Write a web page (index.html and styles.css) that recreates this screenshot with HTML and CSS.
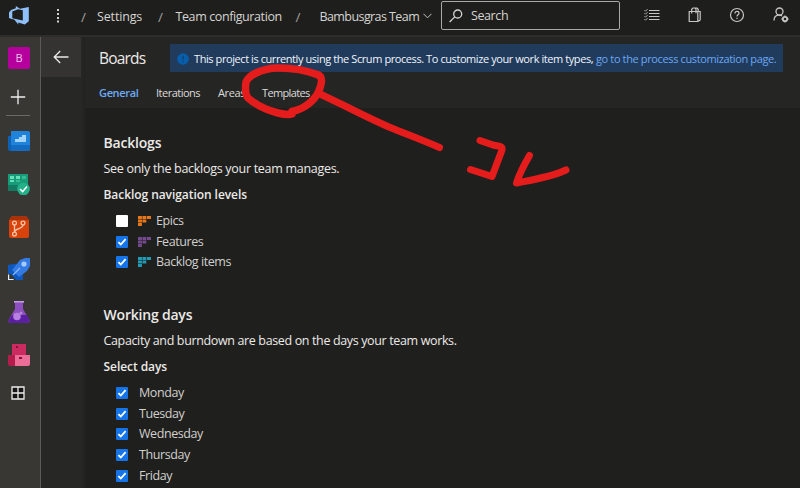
FILE: index.html
```
<!DOCTYPE html>
<html lang="en">
<head>
<meta charset="utf-8">
<title>Boards - Settings</title>
<link rel="stylesheet" href="styles.css">
</head>
<body>
<header class="topbar">
  <svg class="logo" width="20" height="20" viewBox="0 0 20 20"><path fill="#8fc0fa" fill-rule="evenodd" d="M0 6.500 2 4 6.800 2.200V0L11 2.700 19.800 1V15.200L15.800 18.600 9.300 16.400V18.500L5.200 13.400 2.500 13 0 12ZM3.300 5.600V12.300L13.800 14.400V4.300L9.200 3.200Z"/></svg>
  <svg class="more" width="4" height="14" viewBox="0 0 4 14" fill="#d4d2d0"><path d="M1 0h2v2H1zM1 4h2v2H1zM1 8h2v2H1zM1 11.500h2v2H1z"/></svg>
  <nav class="crumbs">
    <span class="slash">/</span><a class="c1">Settings</a>
    <span class="slash">/</span><a class="c2">Team configuration</a>
    <span class="slash">/</span><a class="c3">Bambusgras Team</a>
    <svg width="9" height="6" viewBox="0 0 9 6" fill="none" stroke="#c8c6c4"><path d="M.5.8 4.500 4.800 8.500.8"/></svg>
  </nav>
  <div class="search">
    <svg width="14" height="14" viewBox="0 0 14 14" fill="none" stroke="#d8d6d4" stroke-width="1.300"><circle cx="8.700" cy="5" r="4"/><path d="M5.800 7.900.6 13"/></svg>
    <span>Search</span>
  </div>
  <div class="tools">
    <svg width="16" height="16" viewBox="0 0 16 16" fill="none" stroke="#c8c6c4"><path d="M5 3.500h10.500M5 6.500h10.500M5 9.500h10.500M5 12.500h10.500" stroke-width="1.200"/><path d="m.5 3.200 1 1 2-2M.5 6.200l1 1 2-2M.5 9.200l1 1 2-2M.5 12.200l1 1 2-2" stroke-width=".9"/></svg>
    <svg width="14" height="16" viewBox="0 0 14 16" fill="none" stroke="#c8c6c4" stroke-width="1.200"><path d="M1.200 4.500h8.600v10H1.200zM9.800 4.500h2.400v8.500l-2.400 1.500M3.700 6.500V2.300L5 1h2l1 1.300v4M7 1h2l1.200 1.300v2.200"/></svg>
    <svg width="16" height="16" viewBox="0 0 16 16" fill="none" stroke="#c8c6c4" stroke-width="1.200"><circle cx="8" cy="8" r="6.500"/><path d="M6 6.500C6 3.700 10 3.900 10 6.300 10 7.800 8 7.800 8 9.500M8 10.700v1.300"/></svg>
    <svg width="16" height="16" viewBox="0 0 16 16" fill="none" stroke="#c8c6c4" stroke-width="1.300"><circle cx="6.500" cy="4.500" r="3.500"/><path d="M1 13.500c0-3.500 2-5.400 5-5.400 1.300 0 2.200.3 3 .9"/><circle cx="12" cy="12" r="2.200" stroke-width="1.800"/><path d="M12 8.500v1M12 14.500v1M8.500 12h1M14.500 12h1" stroke-width="1.400"/></svg>
  </div>
</header>
<div class="shell">
  <aside class="rail">
    <div class="avatar">B</div>
    <svg class="plus" width="16" height="16" viewBox="0 0 16 16" stroke="#f0efee" stroke-width="1.300"><path d="M8 .8v14.400M.8 8h14.400"/></svg>
    <hr>
    <svg class="app" width="22" height="22" viewBox="0 0 22 22"><path fill="#1161b3" d="M0 6h5v15H2q-2 0-2-2z"/><path fill="#1f83dc" d="M4 1h16q2 0 2 2v16q0 2-2 2H3V1z"/><path fill="#0c5daf" d="M1 15h21v4q0 2-2 2H2q-1 0-1-2z" opacity=".6"/><path fill="#a5d4fa" d="M7 12V9h4V7h3V5h4v7z"/></svg>
    <svg class="app" width="22" height="22" viewBox="0 0 22 22"><path fill="#189b79" d="M0 1h20v17H2q-2 0-2-2z"/><path fill="#137b61" d="M0 12h13v6H2q-2 0-2-2z"/><path fill="#67dfb7" d="M2 3h4v3H2zM8 3h4v3H8zM2 7h4v2H2z"/><path fill="#36ba91" d="M14 3h4v3h-4zM8 7h4v2H8z"/><circle cx="15.500" cy="16" r="6.300" fill="#23b18a"/><path d="m12 16 2.700 2.600 4.300-5" fill="none" stroke="#fff" stroke-width="1.500"/></svg>
    <svg class="app" width="22" height="22" viewBox="0 0 22 22"><path fill="#d8430c" d="M4 0h14l3 4v16q0 2-2 2H3q-2 0-2-2V4z"/><path fill="#a9320b" d="M4 0h14l3 4H1z"/><g fill="none" stroke="#ffc3a7" stroke-width="1.300"><circle cx="6.500" cy="7" r="1.900"/><circle cx="15" cy="7" r="1.900"/><circle cx="6.500" cy="18" r="1.900"/><path d="M6.500 9v7M15 9c0 4-8 3-8.500 7"/></g></svg>
    <svg class="app" width="22" height="22" viewBox="0 0 22 22"><path fill="#0d57bd" d="M0 7 5 6h10v16H8l-5-6H0z"/><path fill="#347ae3" d="m12 2 5-2h5v8l-3 5-8 6-7-7z"/><circle cx="16" cy="6" r="2.600" fill="#a5caff"/><path d="m5 17 7-7" stroke="#8db9fc" stroke-width="1.300"/><path d="M.6 16.500v5h5" fill="none" stroke="#e6f2ff" stroke-width="1.200"/></svg>
    <svg class="app" width="22" height="22" viewBox="0 0 22 22"><path fill="#8b50be" d="M6 0h10v2h-1v6l6.500 11q.8 3-2.500 3H3q-3.300 0-2.500-3L7 8V2H6z"/><path fill="#5b20a1" d="M4 14h15l2.500 5q.8 3-2.500 3H3q-3.300 0-2.500-3z"/><path fill="#c399e3" d="M6 0h10v1.500H6z"/><circle cx="9" cy="15.500" r="3.800" fill="#b77fe1"/><circle cx="13" cy="12" r="1.500" fill="#b985dd"/></svg>
    <svg class="app" width="22" height="22" viewBox="0 0 22 22"><path fill="#ca2c62" d="M4 0h14v11H4z"/><path fill="#b41c4b" d="M0 11h7v11H2q-2 0-2-2z"/><path fill="#ed6d99" d="M7 11h15v9q0 2-2 2H7z"/><path fill="#8a1238" d="M8 2h2v2H8zM11 13h3v2h-3z"/></svg>
    <svg class="grid" width="14" height="14" viewBox="0 0 14 14" fill="#151515" stroke="#eeedea" stroke-width="1.300"><path d="M1 1h12v12H1zM7 1v12M1 7h12"/></svg>
  </aside>
  <div class="backcol"><div class="back"><svg width="16" height="14" viewBox="0 0 16 14" fill="none" stroke="#eceae8" stroke-width="1.300"><path d="M15.500 7H1.200M7.200 1l-6 6 6 6"/></svg></div></div>
  <main class="main">
    <div class="head">
      <div class="titlerow">
        <h1>Boards</h1>
        <div class="banner"><svg width="12" height="12" viewBox="0 0 12 12"><circle cx="6" cy="6" r="5.800" fill="#075fac"/><path d="M6 2.800v4M6 8v1.300" stroke="#173e68" stroke-width="1.200"/></svg><span class="msg">This project is currently using the Scrum process. To customize your work item types,</span><a class="link">go to the process customization page.</a></div>
      </div>
      <nav class="tabs"><a class="t1">General</a><a class="t2">Iterations</a><a class="t3">Areas</a><a class="t4">Templates</a></nav>
    </div>
    <section class="backlogs">
      <h2>Backlogs</h2>
      <p class="p-a">See only the backlogs your team manages.</p>
      <h3>Backlog navigation levels</h3>
      <ul>
        <li><i class="box"></i><svg class="lvl orange" width="13" height="10"><use href="#lv"/></svg><span>Epics</span></li>
        <li><i class="box on"><svg width="12" height="12"><use href="#ck"/></svg></i><svg class="lvl purple" width="13" height="10"><use href="#lv"/></svg><span>Features</span></li>
        <li><i class="box on"><svg width="12" height="12"><use href="#ck"/></svg></i><svg class="lvl teal" width="13" height="10"><use href="#lv"/></svg><span>Backlog items</span></li>
      </ul>
    </section>
    <section class="days">
      <h2>Working days</h2>
      <p class="p-b">Capacity and burndown are based on the days your team works.</p>
      <h3>Select days</h3>
      <ul>
        <li><i class="box on"><svg width="12" height="12"><use href="#ck"/></svg></i><span>Monday</span></li>
        <li><i class="box on"><svg width="12" height="12"><use href="#ck"/></svg></i><span>Tuesday</span></li>
        <li><i class="box on"><svg width="12" height="12"><use href="#ck"/></svg></i><span>Wednesday</span></li>
        <li><i class="box on"><svg width="12" height="12"><use href="#ck"/></svg></i><span>Thursday</span></li>
        <li><i class="box on"><svg width="12" height="12"><use href="#ck"/></svg></i><span>Friday</span></li>
      </ul>
    </section>
  </main>
</div>
<svg class="ink" width="800" height="488" viewBox="0 0 800 488" fill="none" stroke="#e51c1c" stroke-width="7" stroke-linecap="round" stroke-linejoin="round">
  <path stroke-width="7.500" d="M292 111.500C304 109 314 101 318.500 92C322.500 82 323 76 317 74.500C305 70 292 67.500 276 68C261 69 249 75 246 82C245 89 245.500 95 248 98C256 105 266 110 278 113C284 114.500 289 115 292 114"/>
  <path d="M318 93 343 105C358 112.500 373 120 389 127C406 134 422 140 439.500 147.500"/>
  <path d="M480 140.500 493 145C498 146 503 146 502 150L492 176.500 470.500 169.500"/>
  <path d="M529.500 155.500C524 165 519 175 516.500 183C532 180 551 177 566 170"/>
</svg>
<svg class="defs" width="0" height="0"><defs>
  <g id="lv"><path d="M0 0h3.900v3H0zM4.400 0h3.900v3H4.400zM8.900 0H13v3H8.900zM0 3.500h3.900v3H0zM4.400 3.500h3.900v3H4.400zM0 7h3.900v3H0z"/></g>
  <path id="ck" d="m2.400 6.200 2.400 2.300 4.800-5.400" fill="none" stroke="#fff" stroke-width="1.800"/>
</defs></svg>
</body>
</html>
```

FILE: styles.css
```
* { box-sizing: border-box; }
body { margin: 0; width: 800px; height: 488px; overflow: hidden; background: #1f1f1d; color: #eceae8; font: 12.5px/20px "Open Sans", "Noto Sans", sans-serif; }
h1, h2, h3, p, ul { margin: 0; padding: 0; font-weight: 400; white-space: nowrap; }
span, a { white-space: nowrap; }
svg { display: block; flex: none; }
.topbar { display: flex; height: 37px; border-bottom: 2px solid #2e2d2b; background: #1e1e1c; }
.logo { margin: 6px 0 0 9px; }
.more { margin: 9px 0 0 27px; }
.crumbs { display: flex; width: 372px; margin-left: 9px; padding: 0 0 0 12px; height: 33px; align-items: center; color: #d6d4d2; }
.crumbs .slash { width: 5px; color: #a3a19f; font-size: 13.5px; }
.crumbs a { flex: none; margin-left: 11px; }
.c1 { width: 61px; letter-spacing: -.15px; }
.crumbs .c2 { width: 120px; margin-left: 12.5px; letter-spacing: -.4px; }
.crumbs .c3 { width: 100px; margin-left: 19px; letter-spacing: -.58px; }
.crumbs svg { margin-left: 3px; margin-top: -2px; }
.search { display: flex; width: 179px; height: 29px; margin-top: 1px; border: 1px solid #aaa8a5; border-radius: 2px; padding-left: 7px; align-items: center; color: #d6d4d2; letter-spacing: -.4px; }
.search span { margin-left: 8px; }
.tools { display: flex; padding: 7px 0 0 24px; gap: 27.5px; }
.shell { display: flex; height: 451px; }
.rail { display: flex; flex-direction: column; flex: none; width: 41px; border-right: 1px solid #5c5b59; background: #383734; padding-top: 10px; }
.avatar { width: 22px; height: 22px; margin-left: 8px; border-radius: 2px; background: #b6009e; color: #f0c7eb; font-size: 11px; line-height: 22px; text-align: center; }
.plus { margin: 20px 0 0 10px; }
.rail hr { width: 24px; height: 1px; margin: 10px 0 14px 6px; border: 0; background: #6b6a67; }
.app { margin: 0 0 20.8px 8px; }
.grid { margin: -1px 0 0 11px; }
.backcol { flex: none; width: 44px; background: linear-gradient(90deg, #272726 40px, #222220); }
.back { display: flex; width: 40px; height: 40px; background: #343332; align-items: center; justify-content: center; }
.main { flex: 1; }
.head { height: 71px; padding: 7px 0 0 14px; background: #252524; }
.titlerow { display: flex; height: 28px; }
h1 { flex: none; width: 71px; font-size: 15.5px; line-height: 29px; letter-spacing: -.8px; }
.banner { display: flex; flex: none; width: 613px; height: 28px; padding: 1px 0 0 7px; align-items: center; background: #213b5d; font-size: 11px; }
.banner .msg { width: 399px; margin-left: 5px; color: #f1f5fa; font-weight: 500; letter-spacing: -.42px; }
.banner .link { margin-left: 3px; color: #6aa8f2; letter-spacing: -.37px; }
.tabs { display: flex; margin-top: 11px; font-size: 11px; color: #dddbd9; }
.t1 { width: 57px; color: #6cabf7; font-weight: 600; letter-spacing: -.35px; }
.t2 { width: 62px; letter-spacing: -.5px; }
.t3 { width: 44px; letter-spacing: -.4px; }
.t4 { letter-spacing: -.65px; }
section { padding-left: 18.5px; }
h2 { font-size: 14px; font-weight: 600; line-height: 20px; letter-spacing: -.2px; }
.backlogs { height: 172px; padding-top: 25px; }
.days { padding-top: 25px; }
p { margin-top: 6px; letter-spacing: -.29px; }
.p-b { letter-spacing: -.36px; }
h3 { margin-top: 6px; font-weight: 600; font-size: 12px; line-height: 20px; letter-spacing: -.06px; }
ul { list-style: none; margin-top: 6px; color: #d2d0ce; }
li { display: flex; height: 20.6px; align-items: center; padding-left: 12.5px; letter-spacing: -.42px; }
.box { width: 12px; height: 12px; border-radius: 1px; background: #fff; }
.box.on { background: #1474e8; }
.lvl { margin: 0 5px 0 10px; }
.days li span { margin-left: 11px; }
.orange { fill: #e8761a; }
.purple { fill: #744a8e; }
.teal { fill: #229ab3; }
.ink { position: absolute; left: 0; top: 0; }
.defs { position: absolute; }
```
